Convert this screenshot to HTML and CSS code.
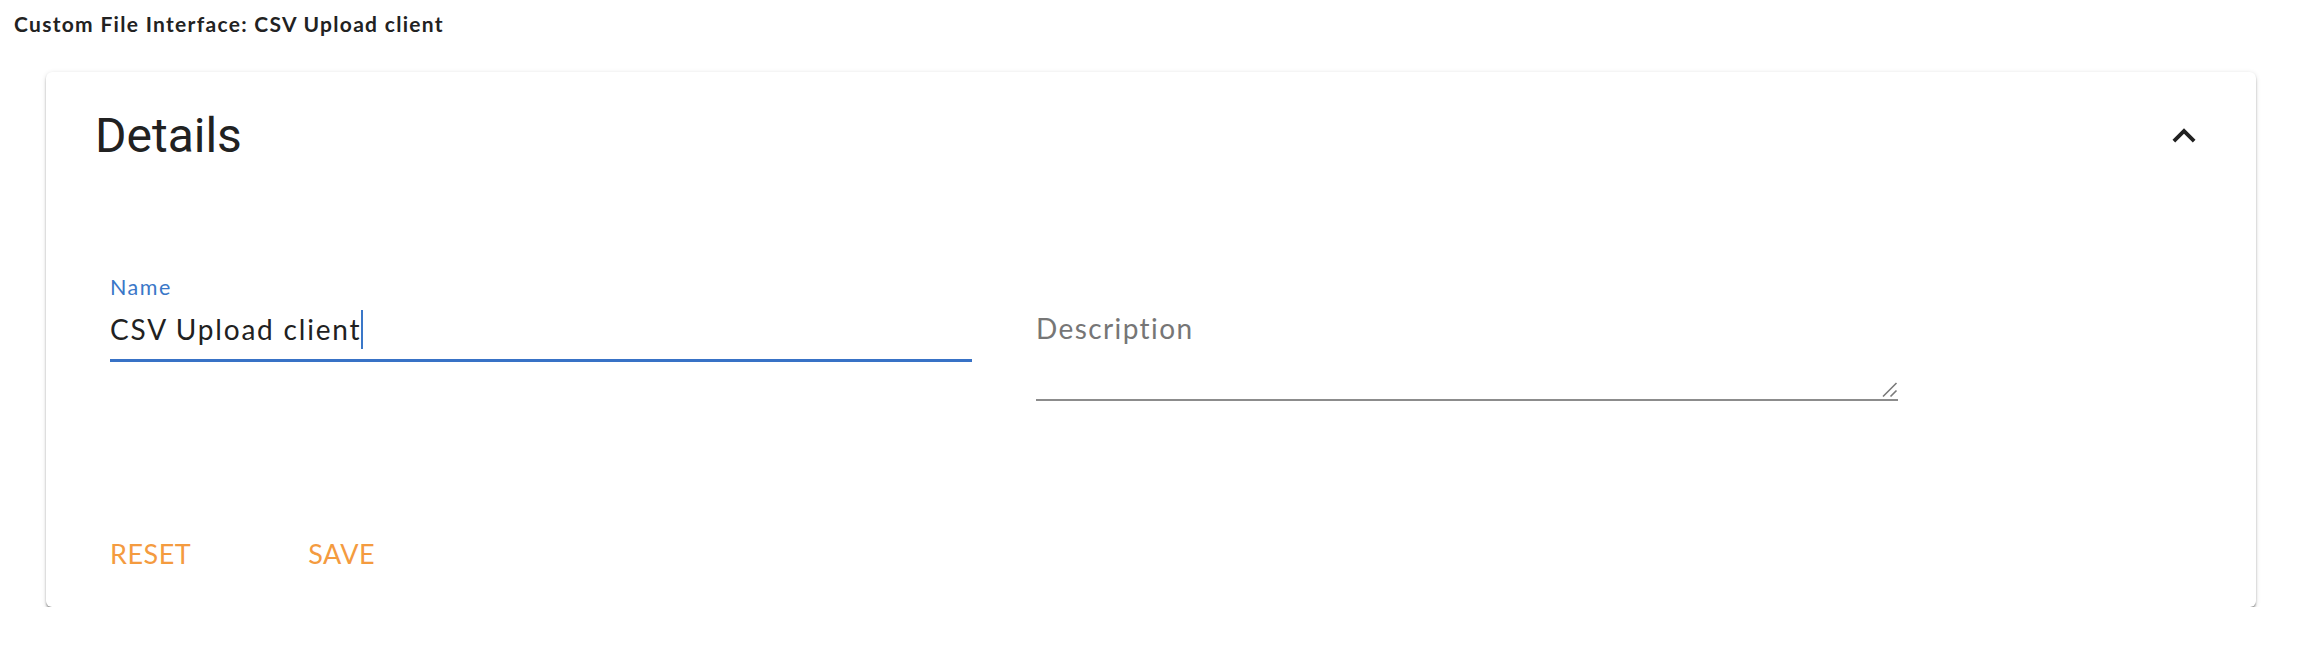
FILE: index.html
```html
<!DOCTYPE html>
<html lang="en">
<head>
<meta charset="utf-8">
<title>Custom File Interface: CSV Upload client</title>
<link rel="stylesheet" href="styles.css">
</head>
<body>
<h1 class="page-title">Custom File Interface: CSV Upload client</h1>
<section class="card">
  <header class="card-header">
    <h2 class="card-title">Details</h2>
    <button class="collapse-btn" aria-label="Collapse">
      <svg class="chevron" viewBox="0 0 24 24" width="46" height="46"><path d="M12 8l-6 6 1.41 1.41L12 10.83l4.59 4.58L18 14z"/></svg>
    </button>
  </header>
  <div class="fields">
    <div class="field field-name">
      <div class="field-label">Name</div>
      <div class="field-value">CSV Upload client<span class="caret"></span></div>
      <div class="underline underline-focused"></div>
    </div>
    <div class="field field-desc">
      <div class="field-label field-label-empty"></div>
      <div class="field-value placeholder">Description</div>
      <svg class="resize-handle" viewBox="0 0 16 16" width="16" height="16"><path d="M1 14.5L14.5 1M8.5 14.5L14.5 8.5" stroke="#7a7a7a" stroke-width="1.6" fill="none"/></svg>
      <div class="underline underline-plain"></div>
    </div>
  </div>
  <div class="actions">
    <button class="text-btn">RESET</button>
    <button class="text-btn">SAVE</button>
  </div>
</section>
</body>
</html>
```

FILE: styles.css
```css
html, body {
  margin: 0;
  padding: 0;
  background: #ffffff;
}

body {
  font-family: Lato, "Liberation Sans", sans-serif;
  color: #212121;
}

.page-title {
  margin: 0;
  padding: 11px 0 0 14px;
  font-family: Lato, "Liberation Sans", sans-serif;
  font-weight: 700;
  font-size: 21px;
  line-height: 26px;
  letter-spacing: 1.3px;
  color: #222222;
}

.card {
  margin: 35px 42px 0 46px;
  height: 535px;
  box-sizing: border-box;
  padding-top: 34px;
  background: #ffffff;
  border-radius: 6px;
  box-shadow: 0 3px 3px -1px rgba(0,0,0,0.32), 0 1.5px 1.5px 0 rgba(0,0,0,0.16), 0 1.5px 5px 0 rgba(0,0,0,0.13);
}

.card-header {
  display: flex;
  align-items: center;
  justify-content: space-between;
  height: 60px;
  padding: 0 49px 0 49px;
}

.card-title {
  margin: 0;
  font-family: Roboto, "Liberation Sans", sans-serif;
  font-weight: 400;
  font-size: 48px;
  line-height: 60px;
  color: #212121;
}

.collapse-btn {
  border: 0;
  background: none;
  padding: 0;
  width: 46px;
  height: 46px;
  display: flex;
}

.chevron {
  fill: #212121;
}

.fields {
  display: grid;
  grid-template-columns: 862px 862px;
  column-gap: 64px;
  padding: 0 64px;
  margin-top: 108px;
}

.field {
  position: relative;
}

.field-label {
  height: 26px;
  font-size: 21.5px;
  line-height: 26px;
  letter-spacing: 1.5px;
  color: #3a77c8;
}

.field-value {
  margin-top: 10px;
  height: 36px;
  font-size: 28px;
  line-height: 36px;
  letter-spacing: 1.8px;
  color: #212121;
  white-space: nowrap;
}

.caret {
  display: inline-block;
  width: 2px;
  height: 39px;
  background: #3a77c8;
  vertical-align: -9px;
  margin-left: 0;
}

.placeholder {
  color: #767676;
  letter-spacing: 1.4px;
}

.underline-focused {
  margin-top: 13px;
  height: 3px;
  background: #3872c6;
}

.underline-plain {
  margin-top: 53px;
  height: 2px;
  background: #8c8c8c;
}

.resize-handle {
  position: absolute;
  right: 0;
  bottom: 3px;
}

.actions {
  display: flex;
  gap: 117px;
  padding: 0 64px;
  margin-top: 137px;
}

.text-btn {
  border: 0;
  background: none;
  padding: 0;
  font-family: Lato, "Liberation Sans", sans-serif;
  font-size: 27px;
  line-height: 32px;
  letter-spacing: 0.5px;
  color: #f49b3f;
}
```
